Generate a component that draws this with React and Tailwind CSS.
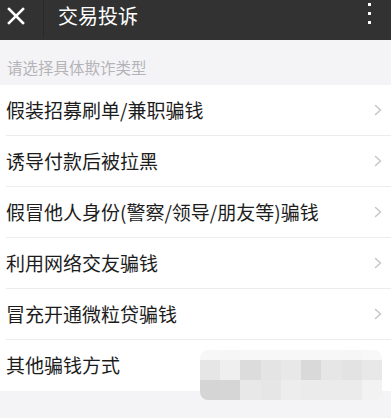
const ITEMS = [
  '假装招募刷单/兼职骗钱',
  '诱导付款后被拉黑',
  '假冒他人身份(警察/领导/朋友等)骗钱',
  '利用网络交友骗钱',
  '冒充开通微粒贷骗钱',
  '其他骗钱方式',
];

// pixelated patch over the last row
const MOSAIC = [
  ['#f7f7f8', '#f6f6f6', '#f7f7f7', '#f7f7f7', '#f7f7f7', '#f7f7f7', '#f7f7f7', '#f6f6f7', '#f8f8f8'],
  ['#e6e6e6', '#efefef', '#dcdcdc', '#e4e4e4', '#e8e8e8', '#d9d9d9', '#e6e6e6', '#e3e3e3', '#e8e8e8'],
  ['#d5d5d5', '#d6d6d6', '#e8e8e8', '#e6e6e6', '#ededed', '#ebebeb', '#ebebeb', '#ebebeb', '#f2f2f2'],
];

const FONT = { fontFamily: '"Noto Sans CJK SC", "Noto Sans", sans-serif' };

function Chevron() {
  return (
    <svg width="8" height="12" viewBox="0 0 8 12" className="shrink-0">
      <polyline points="1.5,1.5 6.5,6 1.5,10.5" fill="none" stroke="#c6c6c8" strokeWidth="1.5" strokeLinecap="round" strokeLinejoin="round" />
    </svg>
  );
}

export default function App() {
  return (
    <div className="relative w-[391px] h-[418px] overflow-hidden bg-[#f4f3f6]" style={FONT}>
      <div className="h-[40px] bg-[#323232] flex items-start">
        <div className="w-[43px] h-[32px] flex items-center pl-[7px]">
          <svg width="18" height="18" viewBox="0 0 18 18">
            <path d="M2 2 L16 16 M16 2 L2 16" stroke="#fff" strokeWidth="2.6" strokeLinecap="square" />
          </svg>
        </div>
        <div className="w-px h-[38px] bg-[#2a2a2a]" />
        <div className="flex-1 h-[32px] flex items-center pl-[14px] text-white text-[20px] leading-none">交易投诉</div>
        <div className="w-[40px] h-[32px] flex flex-col items-center justify-center gap-[6px] pr-[4px] pb-[6px]">
          <span className="block w-[3px] h-[3px] bg-white" />
          <span className="block w-[3px] h-[3px] bg-white" />
          <span className="block w-[3px] h-[3px] bg-white" />
        </div>
      </div>

      <div className="h-[45px] pl-[7px] pt-[17px] text-[15.5px] leading-[20px] text-[#b4b4b8]">请选择具体欺诈类型</div>

      <div className="bg-white">
        {ITEMS.map((t, i) => (
          <div key={t} className="h-[51px] pl-[6px]">
            <div className={`h-full flex items-center pr-[9px] ${i < ITEMS.length - 1 ? 'border-b border-[#ececee]' : ''}`}>
              <span className="flex-1 text-[19px] leading-none text-[#1c1c1c] pb-[2px]">{t}</span>
              <Chevron />
            </div>
          </div>
        ))}
      </div>

      <div className="absolute left-[200px] top-[350px] w-[182px] h-[50px] rounded-[8px] overflow-hidden grid grid-cols-9 grid-rows-[10px_20px_20px] blur-[0.6px]">
        {MOSAIC.flat().map((c, i) => (
          <div key={i} style={{ background: c }} />
        ))}
      </div>
    </div>
  );
}
